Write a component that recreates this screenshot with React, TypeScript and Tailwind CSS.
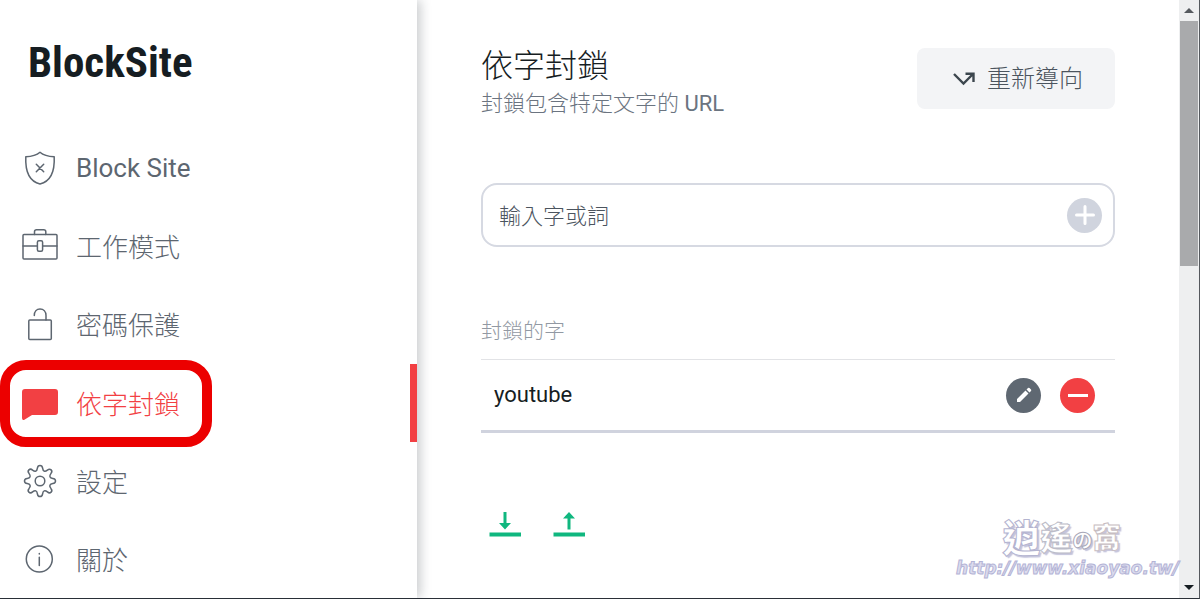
import { useState } from "react";
import type { FormEvent, ReactNode } from "react";
import clsx from "clsx";

interface NavItem {
  id:    string;
  label: string;
  latin?: boolean;
  icon:  ReactNode;
}

const stroke = {
  fill: "none",
  stroke: "currentColor",
  strokeWidth: 1.5,
  strokeLinecap: "round",
  strokeLinejoin: "round",
} as const;

const NAV: NavItem[] = [
  {
    id: "block", label: "Block Site", latin: true,
    icon: (
      <svg viewBox="0 0 36 36" className="size-9" {...stroke}>
        <path d="M18 2.2C14.5 5.2 9 6.5 3.8 6.8C3.3 18 5.5 31 18 34C30.5 31 32.7 18 32.2 6.8C27 6.5 21.5 5.2 18 2.2Z" />
        <path d="M14.3 14.3L21.7 21.7M21.7 14.3L14.3 21.7" />
      </svg>
    ),
  },
  {
    id: "work", label: "工作模式",
    icon: (
      <svg viewBox="0 0 36 36" className="size-9" {...stroke}>
        <rect x="1" y="6.5" width="34" height="24.5" rx="1" />
        <path d="M12.5 6.5V3.8Q12.5 1.7 14.6 1.7H21.7Q23.8 1.7 23.8 3.8V6.5M1 18H15.4M20.6 18H35" />
        <rect x="15.4" y="12.8" width="5.2" height="10.4" rx="1.5" />
      </svg>
    ),
  },
  {
    id: "password", label: "密碼保護",
    icon: (
      <svg viewBox="0 0 36 36" className="size-9" {...stroke}>
        <rect x="6.8" y="14" width="22.5" height="19.5" rx="1" />
        <path d="M12.3 9.5C12.3 5.5 14.7 3 18 3C21.5 3 24 5.5 24 9.5V14" />
      </svg>
    ),
  },
  {
    id: "words", label: "依字封鎖",
    icon: (
      <svg viewBox="0 0 36 36" className="size-9" fill="currentColor">
        <path d="M3 4H33Q36 4 36 7V27Q36 30 33 30H10L2 35Q0 35.5 0 33V7Q0 4 3 4Z" />
      </svg>
    ),
  },
  {
    id: "settings", label: "設定",
    icon: (
      <svg viewBox="0 0 36 36" className="size-9" {...stroke}>
        <path d="M18 2.5Q20.3 2.5 20.6 5.2Q20.9 7.6 22.2 8.1Q23.5 8.6 25.4 7.1Q27.5 5.4 29.1 6.9Q30.7 8.5 28.9 10.6Q27.4 12.5 27.9 13.8Q28.4 15.1 30.8 15.4Q33.5 15.7 33.5 18Q33.5 20.3 30.8 20.6Q28.4 20.9 27.9 22.2Q27.4 23.5 28.9 25.4Q30.7 27.5 29.1 29.1Q27.5 30.7 25.4 28.9Q23.5 27.4 22.2 27.9Q20.9 28.4 20.6 30.8Q20.3 33.5 18 33.5Q15.7 33.5 15.4 30.8Q15.1 28.4 13.8 27.9Q12.5 27.4 10.6 28.9Q8.5 30.7 6.9 29.1Q5.3 27.5 7.1 25.4Q8.6 23.5 8.1 22.2Q7.6 20.9 5.2 20.6Q2.5 20.3 2.5 18Q2.5 15.7 5.2 15.4Q7.6 15.1 8.1 13.8Q8.6 12.5 7.1 10.6Q5.3 8.5 6.9 6.9Q8.5 5.3 10.6 7.1Q12.5 8.6 13.8 8.1Q15.1 7.6 15.4 5.2Q15.7 2.5 18 2.5Z" />
        <circle cx="18" cy="18" r="4.8" />
      </svg>
    ),
  },
  {
    id: "about", label: "關於",
    icon: (
      <svg viewBox="0 0 36 36" className="size-9" {...stroke}>
        <circle cx="17.3" cy="18" r="13" />
        <path d="M17.3 16.3V24.5M17.3 12.4V12.9" />
      </svg>
    ),
  },
];

function Sidebar({ active, onSelect }: { active: string; onSelect: (id: string) => void }) {
  return (
    <aside className="relative z-10 flex w-[417px] shrink-0 flex-col bg-white shadow-[4px_0_10px_rgba(30,40,50,0.22)]">
      <div className="flex h-[129px] items-center px-7 pb-1 font-['Roboto_Condensed',Roboto,sans-serif] text-[43px] leading-none font-bold text-[#161d22]">
        BlockSite
      </div>
      <nav className="flex flex-1 flex-col">
        {NAV.map(item => (
          <a
            key={item.id}
            href={`#${item.id}`}
            onClick={() => onSelect(item.id)}
            className={clsx(
              "relative flex min-h-[78px] flex-1 items-center gap-[18px] pl-[22px] text-[26px] leading-8",
              item.latin ? "font-normal" : "font-light",
              item.id === active ? "text-[#f24043]" : "text-[#5d6670]",
            )}
          >
            {item.icon}
            <span className={clsx(!item.latin && "pt-1")}>{item.label}</span>
            {item.id === active && (
              <>
                <span className="ml-auto w-[7px] self-stretch bg-[#f24043]" />
                <span className="absolute -top-1 left-0 h-[87px] w-[212px] rounded-[26px] border-10 border-[#ec0000]" />
              </>
            )}
          </a>
        ))}
      </nav>
    </aside>
  );
}

function Scrollbar() {
  return (
    <div aria-hidden="true" className="flex w-5 shrink-0 flex-col items-center bg-[#eeeff0]">
      <svg viewBox="0 0 20 21" className="h-[21px] w-5 shrink-0" fill="#55595e">
        <path d="M5 13L10 8L15 13Z" />
      </svg>
      <div className="h-[245px] w-[18px] bg-[#a9aaac]" />
      <svg viewBox="0 0 20 21" className="mt-auto h-[21px] w-5 shrink-0" fill="#161d22">
        <path d="M5 8L10 13L15 8Z" />
      </svg>
    </div>
  );
}

function Watermark() {
  return (
    <div className="pointer-events-none absolute right-0 bottom-5 z-10 flex flex-col items-center">
      <div className="mb-1 flex items-end pr-3 font-['Noto_Sans_CJK_TC',sans-serif] leading-9 font-black text-white [text-shadow:2px_2px_1px_#c4c4dc]">
        <span className="text-[38px] [-webkit-text-stroke:1px_#b4b4d0]">逍</span>
        <span className="text-[32px] [-webkit-text-stroke:1px_#bcbcc8]">遙</span>
        <span className="text-[20px] leading-7 [-webkit-text-stroke:1px_#a8a8b8]">の</span>
        <span className="text-[28px] [-webkit-text-stroke:1px_#c8bec2]">窩</span>
      </div>
      <span className="font-['DejaVu_Sans',sans-serif] text-[17px] leading-5 font-bold text-[#dcdcee] italic [-webkit-text-stroke:1px_#b4b4d6]">
        http://www.xiaoyao.tw/
      </span>
    </div>
  );
}

export default function App() {
  const [active, setActive] = useState("words");
  const [word,   setWord]   = useState("");
  const [words,  setWords]  = useState<string[]>(["youtube"]);

  function addWord(e: FormEvent) {
    e.preventDefault();
    const w = word.trim();
    if (!w) return;
    setWords(list => [...list, w]);
    setWord("");
  }

  return (
    <div className="flex min-h-screen border-r border-b border-r-[#55595e] border-b-[#2b3038] bg-white font-[Roboto,'Noto_Sans_CJK_TC',sans-serif]">
      <Sidebar active={active} onSelect={setActive} />

      <main className="relative min-w-0 flex-1 px-16 pt-12">
        <header className="flex items-start justify-between">
          <div>
            <h1 className="text-[32px] leading-9 font-light text-[#161d22]">依字封鎖</h1>
            <p className="mt-1 text-[22px] leading-8 font-light text-[#6b7480]">
              封鎖包含特定文字的 <span className="font-normal">URL</span>
            </p>
          </div>
          <button className="flex h-[61px] items-center gap-3 rounded-lg bg-[#f3f4f6] pr-8 pl-9 text-2xl font-light text-[#4b545e]">
            <svg viewBox="0 0 22 14" className="h-[14px] w-[22px]" fill="none" stroke="#3c464e" strokeWidth="2.4">
              <path d="M1 2L10.5 11.5L20 2M12.5 1.7H20.5V10" />
            </svg>
            重新導向
          </button>
        </header>

        <form onSubmit={addWord} className="mt-[63px] flex h-16 items-center rounded-2xl border-2 border-[#d6d9e2] pr-[11px] pl-4">
          <input
            aria-label="輸入字或詞"
            placeholder="輸入字或詞"
            value={word}
            onChange={e => setWord(e.target.value)}
            className="min-w-0 flex-1 pt-1 text-[22px] leading-8 font-light text-[#161d22] outline-none placeholder:text-[#4b545e]"
          />
          <button aria-label="新增" className="flex size-[35px] items-center justify-center rounded-full bg-[#d0d4de]">
            <svg viewBox="0 0 20 20" className="size-5" stroke="#fff" strokeWidth="3" strokeLinecap="round">
              <path d="M10 1.5V18.5M1.5 10H18.5" />
            </svg>
          </button>
        </form>

        <h2 className="mt-[68px] text-[21px] leading-8 font-light text-[#9299a3]">封鎖的字</h2>
        <ul className="mt-3 border-t border-[#e2e3e6]">
          {words.map(w => (
            <li key={w} className="flex h-[73px] items-center gap-[19px] border-b-3 border-[#d0d3de] pr-5 pl-[13px]">
              <span className="mr-auto text-[22px] leading-8 text-[#161d22]">{w}</span>
              <button aria-label={`編輯 ${w}`} className="flex size-[35px] items-center justify-center rounded-full bg-[#5f6872]">
                <svg viewBox="0 0 16 16" className="size-4" fill="#fff">
                  <path d="M1 12L9.5 3.5L12.5 6.5L4 15H1ZM10.5 2.5L12 1Q12.8 .4 13.5 1L15 2.5Q15.6 3.2 15 4L13.5 5.5Z" />
                </svg>
              </button>
              <button
                aria-label={`移除 ${w}`}
                onClick={() => setWords(list => list.filter(x => x !== w))}
                className="flex size-[35px] items-center justify-center rounded-full bg-[#f24043]"
              >
                <span className="h-[3px] w-5 bg-white" />
              </button>
            </li>
          ))}
        </ul>

        <div className="mt-[79px] flex gap-8 pl-2">
          <button aria-label="匯入">
            <svg viewBox="0 0 32 25" className="h-[25px] w-8" fill="#10b77f">
              <path d="M14.5 0H17.5V11H22L16 17.5L10 11H14.5ZM.5 20.5H32V24.5H.5Z" />
            </svg>
          </button>
          <button aria-label="匯出">
            <svg viewBox="0 0 32 25" className="h-[25px] w-8" fill="#10b77f">
              <path d="M14.5 17.5H17.5V6.5H22L16 0L10 6.5H14.5ZM.5 20.5H32V24.5H.5Z" />
            </svg>
          </button>
        </div>

        <Watermark />
      </main>

      <Scrollbar />
    </div>
  );
}
